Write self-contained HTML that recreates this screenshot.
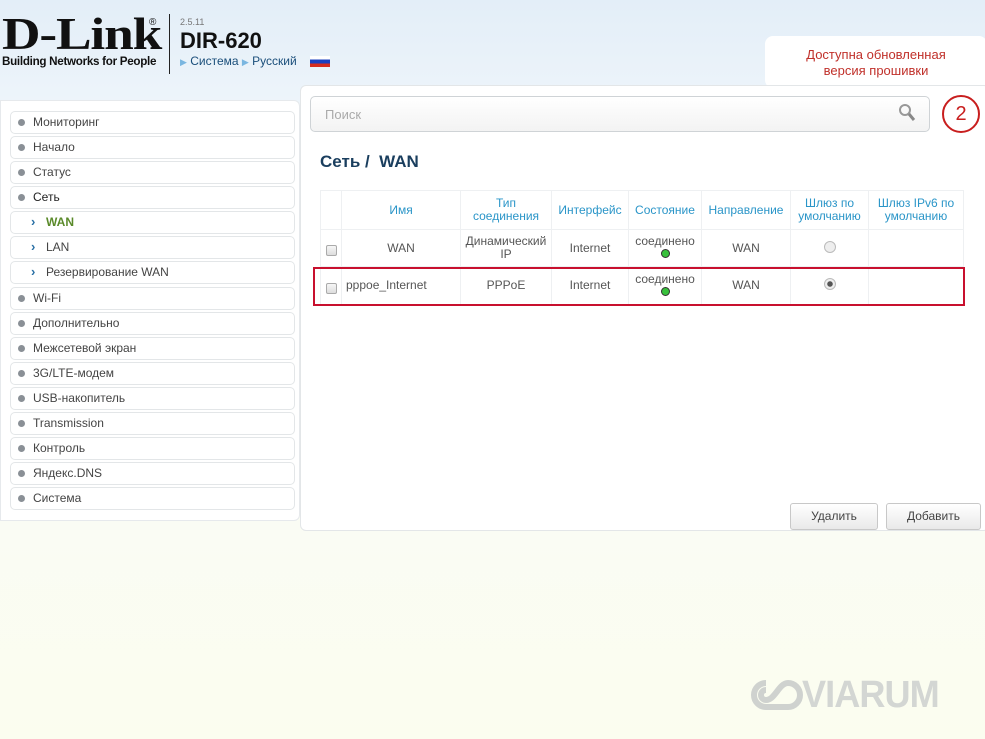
<!DOCTYPE html>
<html><head><meta charset="utf-8"><style>
*{margin:0;padding:0;box-sizing:border-box}
body{width:985px;height:739px;overflow:hidden;position:relative;font-family:"Liberation Sans",Arial,sans-serif;font-size:12px;color:#444;
background:linear-gradient(to bottom,#e3eef8 0px,#f3f8fb 160px,#fafcf7 400px,#fbfdef 739px)}
.abs{position:absolute}
.menu{left:0;top:100px;width:300px;height:421px;background:#fff;border-radius:0 6px 6px 0;border:1px solid #e6e9ec}
.mi{position:absolute;left:10px;width:285px;height:23px;border:1px solid #e3e6e8;border-radius:5px;background:#fff;line-height:21px;padding-left:22px;color:#444;font-size:12px}
.mi:before{content:"";position:absolute;left:7px;top:7px;width:7px;height:7px;border-radius:50%;background:#8a9096}
.mi.sub{padding-left:35px}
.mi.sub:before{content:"›";background:none;left:20px;top:-1px;color:#2a70a5;font-weight:bold;font-size:13px;width:auto;height:auto}
.main{left:300px;top:85px;width:690px;height:446px;background:#fff;border:1px solid #e3e6e8;border-radius:6px}
table{position:absolute;left:320px;top:190px;border-collapse:collapse;width:644px}
td,th{border:1px solid #eef0f2;text-align:center;font-size:12px;color:#555;font-weight:normal;vertical-align:middle;line-height:13px}
th{color:#2a95c8;height:39px}
.chk{display:inline-block;width:11px;height:11px;border:1px solid #aaa;border-radius:2px;background:linear-gradient(#f6f6f6,#ddd);margin-top:8px}
.dot{display:inline-block;width:9px;height:9px;border-radius:50%;background:#38c13c;border:1px solid #333}
.rad{display:inline-block;width:12px;height:12px;border-radius:50%;border:1px solid #bbb;background:#eee;position:relative}
.btn{position:absolute;top:503px;height:27px;border:1px solid #c8c8c8;border-radius:3px;background:linear-gradient(#fff,#e9e9e9);text-align:center;line-height:25px;color:#444}
</style></head><body>
<div class="abs" style="left:2px;top:12px;font-family:'Liberation Serif',serif;font-weight:bold;font-size:46px;color:#111;letter-spacing:-1px;line-height:44px;transform:scaleX(1.16);transform-origin:0 0">D-Link</div>
<div class="abs" style="left:149px;top:17px;font-size:10px;color:#111">®</div>
<div class="abs" style="left:2px;top:54px;font-size:12px;font-weight:bold;color:#111;letter-spacing:-0.3px;transform:scaleX(0.97);transform-origin:0 0">Building Networks for People</div>
<div class="abs" style="left:169px;top:14px;width:1px;height:60px;background:#222"></div>
<div class="abs" style="left:180px;top:17px;font-size:9px;color:#777">2.5.11</div>
<div class="abs" style="left:180px;top:28px;font-size:22px;font-weight:bold;color:#111">DIR-620</div>
<div class="abs" style="left:180px;top:54px;font-size:12px;color:#1a4e7a"><span style="color:#7ab6e0;font-size:9px">▶</span> Система <span style="color:#7ab6e0;font-size:9px">▶</span> Русский</div>
<div class="abs" style="left:310px;top:56px;width:20px;height:11px;background:linear-gradient(#fff 0 33%,#1a3fc0 33% 66%,#d52b1e 66%)"></div>
<div class="abs" style="left:765px;top:36px;width:222px;height:52px;background:#fff;border-radius:8px;text-align:center;color:#c0302a;font-size:13px;line-height:16px;padding-top:11px">Доступна обновленная<br>версия прошивки</div>
<div class="abs" style="left:944px;top:86px;width:0;height:0;border-left:7px solid transparent;border-right:7px solid transparent;border-top:8px solid #fff"></div>
<div class="menu abs"></div>
<div class="mi" style="top:111px">Мониторинг</div>
<div class="mi" style="top:136px">Начало</div>
<div class="mi" style="top:161px">Статус</div>
<div class="mi" style="top:186px;color:#222">Сеть</div>
<div class="mi sub" style="top:211px;color:#5a8a2a;font-weight:bold">WAN</div>
<div class="mi sub" style="top:236px">LAN</div>
<div class="mi sub" style="top:261px">Резервирование WAN</div>
<div class="mi" style="top:287px">Wi-Fi</div>
<div class="mi" style="top:312px">Дополнительно</div>
<div class="mi" style="top:337px">Межсетевой экран</div>
<div class="mi" style="top:362px">3G/LTE-модем</div>
<div class="mi" style="top:387px">USB-накопитель</div>
<div class="mi" style="top:412px">Transmission</div>
<div class="mi" style="top:437px">Контроль</div>
<div class="mi" style="top:462px">Яндекс.DNS</div>
<div class="mi" style="top:487px">Система</div>
<div class="main abs"></div>
<div class="abs" style="left:310px;top:96px;width:620px;height:36px;border:1px solid #cfd3d6;border-radius:5px;background:linear-gradient(#fff,#f3f3f3);padding:10px 14px;color:#aaa;font-size:13px">Поиск</div>
<svg class="abs" style="left:898px;top:103px" width="18" height="20"><circle cx="7" cy="7" r="5" fill="none" stroke="#999" stroke-width="2"/><line x1="11" y1="11" x2="16" y2="17" stroke="#888" stroke-width="3"/></svg>
<div class="abs" style="left:942px;top:95px;width:38px;height:38px;border:2px solid #c81e1e;border-radius:50%;text-align:center;line-height:34px;font-size:20px;color:#c81e1e;background:#fff">2</div>
<div class="abs" style="left:320px;top:152px;font-size:17px;font-weight:bold;color:#1a3e5e">Сеть /&nbsp; WAN</div>
<table>
<tr><th style="width:21px"></th><th style="width:119px">Имя</th><th style="width:91px">Тип<br>соединения</th><th style="width:77px">Интерфейс</th><th style="width:73px">Состояние</th><th style="width:89px">Направление</th><th style="width:78px">Шлюз по<br>умолчанию</th><th>Шлюз IPv6 по<br>умолчанию</th></tr>
<tr style="height:37px"><td><span class="chk"></span></td><td>WAN</td><td>Динамический<br>IP</td><td>Internet</td><td>соединено<br><span class="dot"></span></td><td>WAN</td><td><span class="rad"></span></td><td></td></tr>
<tr style="height:38px"><td><span class="chk"></span></td><td style="text-align:left;padding-left:4px">pppoe_Internet</td><td>PPPoE</td><td>Internet</td><td>соединено<br><span class="dot"></span></td><td>WAN</td><td><span class="rad" style="background:radial-gradient(#555 0 2.5px,#eee 3px)"></span></td><td></td></tr>
</table>
<div class="abs" style="left:313px;top:267px;width:652px;height:39px;border:2px solid #c8102e"></div>
<div class="btn" style="left:790px;width:88px">Удалить</div>
<div class="btn" style="left:886px;width:95px">Добавить</div>
<svg class="abs" style="left:750px;top:678px" width="56" height="34"><path d="M16 5a12 12 0 1 0 0 24h22a12 12 0 1 0 0-24c-9 0-13 17-22 17a5 5 0 0 1 0-10" fill="none" stroke="#cfd2cf" stroke-width="6"/></svg>
<div class="abs" style="left:802px;top:674px;font-size:38px;font-weight:bold;color:#d3d6d3;letter-spacing:-1px;transform:scaleX(0.95);transform-origin:0 0">VIARUM</div>
</body></html>
